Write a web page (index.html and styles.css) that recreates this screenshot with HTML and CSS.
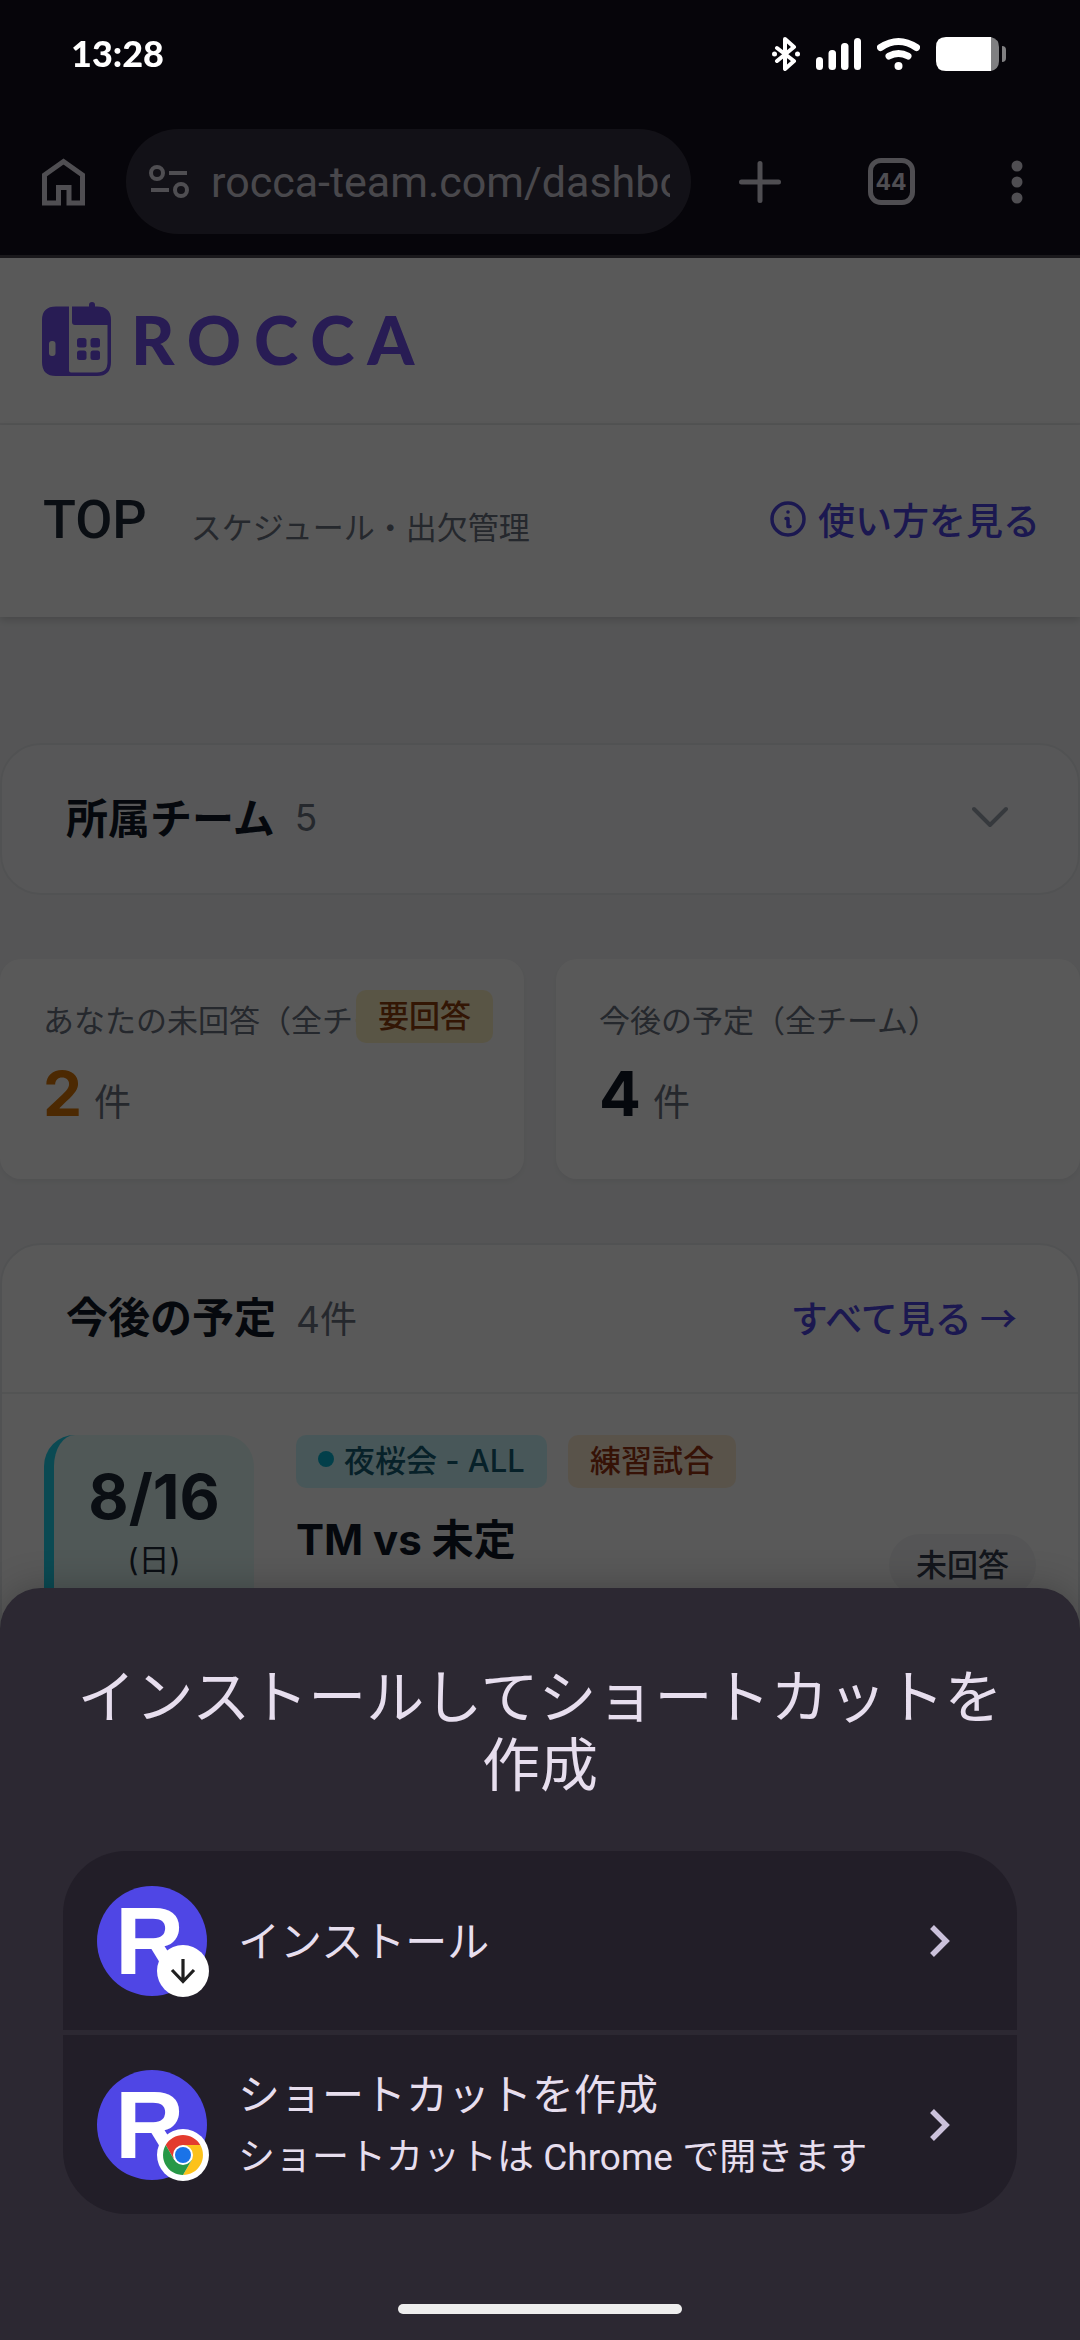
FILE: index.html
```html
<!DOCTYPE html>
<html lang="ja">
<head>
<meta charset="utf-8">
<meta name="viewport" content="width=device-width, initial-scale=1">
<title>ROCCA</title>
<link rel="stylesheet" href="styles.css">
</head>
<body>

<!-- status bar -->
<div class="status">
  <span class="clock">13:28</span>
  <div class="status-icons">
    <svg width="28" height="34" viewBox="0 0 28 34" fill="none" stroke="#fff" stroke-width="4" stroke-linecap="round" stroke-linejoin="round"><path d="M5 11l17 13-9 8V2l9 8L5 24"/><circle cx="2.500" cy="17" r="2.500" fill="#fff" stroke="none"/><circle cx="25.500" cy="17" r="2.500" fill="#fff" stroke="none"/></svg>
    <svg width="45" height="34" viewBox="0 0 45 34" fill="#fff"><rect y="20" width="7" height="13" rx="3.500"/><rect x="12.500" y="13" width="7.500" height="20" rx="3.500"/><rect x="25" y="6" width="7.500" height="27" rx="3.500"/><rect x="38" y="1" width="7" height="32" rx="3.500"/></svg>
    <svg width="43" height="34" viewBox="0 0 43 34" fill="none" stroke="#fff" stroke-width="7" stroke-linecap="round"><path d="M3.500 10.500Q21.500-1.500 39.500 10.500M12 19q9.500-5 19 0"/><circle cx="21.500" cy="29" r="4" fill="#fff" stroke="none"/></svg>
    <svg width="70" height="34" viewBox="0 0 70 34"><path d="M55 0q8 2 8 10v14q0 8-8 10z" fill="#808082"/><path d="M10 0h45v34H10Q0 34 0 24V10Q0 0 10 0z" fill="#fff"/><path d="M66 9q4 0 4 4v8q0 4-4 4z" fill="#808082"/></svg>
  </div>
</div>

<!-- browser toolbar -->
<div class="toolbar">
  <button class="tool" aria-label="ホーム"><svg width="43" height="48" viewBox="0 0 43 48" fill="none" stroke="currentColor" stroke-width="5"><path d="M2.500 45V17L21.500 3.500 40.500 17v28H27V29.500H16.500V45z"/></svg></button>
  <div class="omnibox">
    <svg width="40" height="34" viewBox="0 0 40 34" fill="none" stroke="currentColor" stroke-width="4"><circle cx="8" cy="8" r="6"/><circle cx="32" cy="25" r="6"/><path d="M20 8h18M2 25h18"/></svg>
    <input class="url" type="text" value="rocca-team.com/dashboard" aria-label="URL">
  </div>
  <button class="tool tool-new" aria-label="新しいタブ"><svg width="42" height="42" viewBox="0 0 42 42" stroke="currentColor" stroke-width="5" stroke-linecap="round"><path d="M21 2.500v37M2.500 21h37"/></svg></button>
  <button class="tool" aria-label="タブ"><span class="tabs">44</span></button>
  <button class="tool" aria-label="メニュー"><svg width="12" height="44" viewBox="0 0 12 44" fill="currentColor"><circle cx="6" cy="6" r="5.500"/><circle cx="6" cy="22" r="5.500"/><circle cx="6" cy="38" r="5.500"/></svg></button>
</div>

<!-- page -->
<header class="brand">
  <svg width="69" height="74" viewBox="0 0 69 74" fill="#7250f0">
    <path d="M27 4.500H14Q0 4.500 0 18v42q0 14 14 14h41q14 0 14-14V18Q69 4.500 55 4.500h-2V3q0-3-3-3t-3 3v1.500H30V20q0 3 3 3h32.500v37q0 10.500-10.500 10.500H29q-2 0-2-2z"/>
    <rect x="7" y="39" width="6.500" height="15" rx="3" fill="#fff"/>
    <rect x="35" y="36" width="9.500" height="9.500" rx="2.500"/><rect x="48.500" y="36" width="9.500" height="9.500" rx="2.500"/>
    <rect x="35" y="48.500" width="9.500" height="9.500" rx="2.500"/><rect x="48.500" y="48.500" width="9.500" height="9.500" rx="2.500"/>
  </svg>
  <span class="wordmark">ROCCA</span>
</header>

<div class="title-bar">
  <h1>TOP</h1>
  <p>スケジュール・出欠管理</p>
  <a class="link help" href="#help">
    <svg width="36" height="36" viewBox="0 0 36 36" fill="none" stroke="currentColor" stroke-width="3.500" stroke-linecap="round" stroke-linejoin="round"><circle cx="18" cy="18" r="16"/><path d="M16 17.500h2v8h2"/><circle cx="18" cy="11" r="1.800" fill="currentColor" stroke="none"/></svg>
    使い方を見る
  </a>
</div>

<main>
  <section class="card teams">
    <h2>所属チーム</h2><span class="count">5</span>
    <button class="toggle" aria-label="開く"><svg width="36" height="22" viewBox="0 0 36 22" fill="none" stroke="currentColor" stroke-width="4" stroke-linecap="round" stroke-linejoin="round"><path d="M2 3l16 16L34 3"/></svg></button>
  </section>

  <div class="stats">
    <div class="stat">
      <div class="stat-head"><p>あなたの未回答（全チーム）</p><span class="tag tag-warn">要回答</span></div>
      <div class="stat-value warn"><b>2</b><span>件</span></div>
    </div>
    <div class="stat">
      <div class="stat-head"><p>今後の予定（全チーム）</p></div>
      <div class="stat-value"><b>4</b><span>件</span></div>
    </div>
  </div>

  <section class="card">
    <div class="card-head">
      <h2>今後の予定</h2><span class="count">4件</span>
      <a class="link" href="#events">すべて見る →</a>
    </div>
    <div class="event">
      <div class="date"><b>8/16</b><span>(日)</span></div>
      <div class="event-body">
        <div class="tags"><span class="tag tag-team"><i class="dot"></i>夜桜会 - ALL</span><span class="tag tag-kind">練習試合</span></div>
        <h3>TM vs 未定</h3>
      </div>
      <span class="answer">未回答</span>
    </div>
  </section>
</main>

<div class="scrim"></div>

<!-- install sheet -->
<div class="sheet" role="dialog" aria-labelledby="sheet-title">
  <h2 class="sheet-title" id="sheet-title">インストールしてショートカットを作成</h2>
  <div class="options">
    <button class="option">
      <span class="app-icon">R
        <svg class="app-badge" width="52" height="52" viewBox="-26 -26 52 52"><circle r="26" fill="#fff"/><path d="M0-12V11M-11-1L0 10.500 11-1" fill="none" stroke="#1f1f1f" stroke-width="3.200"/></svg>
      </span>
      <span class="option-text">インストール</span>
      <svg width="20" height="32" viewBox="0 0 20 32" fill="none" stroke="#cbc1db" stroke-width="5.500"><path d="M2 2l14 14L2 30"/></svg>
    </button>
    <button class="option">
      <span class="app-icon">R
        <svg class="app-badge" width="52" height="52" viewBox="-26 -26 52 52"><circle r="26" fill="#fff"/><path d="M-17.300-10A20 20 0 0 1 17.300-10H0L-8.700 5z" fill="#e33b2e"/><path d="M17.300-10A20 20 0 0 1 0 20L8.700 5 0-10z" fill="#fcc21b"/><path d="M0 20A20 20 0 0 1-17.300-10L-8.700 5H8.700z" fill="#279847"/><circle r="10" fill="#fff"/><circle r="8" fill="#1a73e8"/></svg>
      </span>
      <span class="option-text">ショートカットを作成<small>ショートカットは Chrome で開きます</small></span>
      <svg width="20" height="32" viewBox="0 0 20 32" fill="none" stroke="#cbc1db" stroke-width="5.500"><path d="M2 2l14 14L2 30"/></svg>
    </button>
  </div>
  <div class="home-bar"></div>
</div>

</body>
</html>
```
FILE: styles.css
```css
* { box-sizing: border-box; }
html { height: 100%; overflow: hidden; }
body {
	margin: 0;
	height: 100%;
	overflow: hidden;
	background: #f3f4f6;
	color: #111827;
	font-family: Inter, "Noto Sans CJK JP", sans-serif;
}
h1, h2, h3, p { margin: 0; }
svg { display: block; flex: none; }
button {
	border: 0;
	padding: 0;
	background: none;
	color: inherit;
	font: inherit;
}

/* status bar */
.status {
	display: flex;
	align-items: center;
	justify-content: space-between;
	height: 108px;
	padding: 0 74px 0 71px;
	background: #120f1d;
}
.clock {
	position: relative;
	z-index: 2;
	padding-bottom: 3px;
	color: #fff;
	font: 900 36px Lato, sans-serif;
}
.status-icons {
	position: relative;
	z-index: 2;
	display: flex;
	gap: 16px;
}

/* toolbar */
.toolbar {
	display: flex;
	align-items: center;
	height: 150px;
	border-bottom: 3px solid #48454f;
	background: #120f1d;
	color: #e2dfea;
}
.tool {
	display: flex;
	justify-content: center;
	flex: none;
	width: 126px;
}
.tool-new { width: 137px; }
.omnibox {
	display: flex;
	align-items: center;
	gap: 22px;
	flex: 1;
	min-width: 0;
	height: 105px;
	padding: 0 21px 0 23px;
	border-radius: 53px;
	background: #363342;
}
.url {
	flex: 1;
	min-width: 0;
	padding: 0;
	border: 0;
	background: none;
	color: #d2cfda;
	font: 43px Roboto, sans-serif;
}
.tabs {
	width: 47px;
	height: 47px;
	border: 5px solid;
	border-radius: 13px;
	font: bold 23px/38px Inter, sans-serif;
	text-align: center;
}

/* page header */
.brand {
	display: flex;
	align-items: center;
	gap: 20px;
	height: 167px;
	padding: 0 42px 4px;
	border-bottom: 2px solid #eeeff1;
	background: #fff;
}
.wordmark {
	color: #7250f0;
	font: 900 67px Lato, sans-serif;
	letter-spacing: 13px;
}
.title-bar {
	display: flex;
	align-items: center;
	gap: 44px;
	height: 192px;
	padding: 0 40px 4px 43px;
	background: #fff;
	box-shadow: 0 3px 8px rgba(0,0,0,.16);
}
.title-bar h1 {
	color: #1f2937;
	font: 500 54px Roboto, sans-serif;
}
.title-bar p {
	padding-top: 12px;
	color: #6b7280;
	font-size: 31px;
}
.link {
	margin-left: auto;
	color: #4f46e5;
	font: 500 37px "Noto Sans CJK JP", sans-serif;
	text-decoration: none;
}
.help {
	display: flex;
	align-items: center;
	gap: 12px;
}

/* cards */
main {
	display: flex;
	flex-direction: column;
	gap: 64px;
	padding-top: 126px;
}
.card {
	border: 2px solid #e9eaed;
	border-radius: 41px;
	background: #fff;
}
.teams, .card-head {
	display: flex;
	align-items: center;
	gap: 20px;
	height: 152px;
	padding: 0 61px 4px 64px;
}
.teams {
	padding-right: 70px;
	background: #fafafb;
}
.card h2 {
	padding-bottom: 4px;
	font-size: 42px;
}
.count {
	color: #6b7280;
	font-size: 37px;
}
.toggle {
	margin-left: auto;
	color: #9ca3af;
}
.stats {
	display: grid;
	grid-template-columns: repeat(2, minmax(0, 1fr));
	gap: 32px;
}
.stat {
	height: 220px;
	padding: 31px 31px 31px 43px;
	border-radius: 21px;
	background: #fff;
	box-shadow: 0 3px 6px rgba(0,0,0,.05);
}
.stat-head {
	display: flex;
	height: 58px;
}
.stat-head p {
	flex: 1;
	min-width: 0;
	overflow: hidden;
	color: #6b7280;
	font-size: 31px;
	line-height: 62px;
	white-space: nowrap;
}
.stat-value {
	display: flex;
	align-items: baseline;
	gap: 12px;
}
.stat-value b {
	font-size: 62px;
	line-height: 92px;
}
.stat-value span {
	color: #6b7280;
	font-size: 37px;
}
.stat-value.warn { color: #d97706; }
.tag {
	display: inline-flex;
	align-items: center;
	flex: none;
	height: 53px;
	padding: 0 22px 6px;
	border-radius: 10px;
	font-size: 31px;
	font-weight: 500;
}
.tag-warn {
	background: #fef3c7;
	color: #92400e;
}
.tag-team {
	background: #cffafe;
	color: #155e75;
}
.tag-kind {
	background: #ffedd5;
	color: #9a3412;
}
.dot {
	width: 16px;
	height: 16px;
	margin-right: 10px;
	border-radius: 50%;
	background: #06b6d4;
}

/* event list */
.card-head {
	height: 149px;
	border-bottom: 2px solid #eeeff1;
}
.event {
	display: flex;
	align-items: flex-start;
	gap: 42px;
	padding: 41px 42px;
}
.date {
	display: flex;
	flex-direction: column;
	align-items: center;
	width: 210px;
	height: 260px;
	padding-top: 25px;
	border-left: 10px solid #22d3ee;
	border-radius: 31px;
	background: #e6fcf8;
	color: #1f2937;
}
.date b {
	font-size: 62px;
	line-height: 74px;
}
.date span {
	font-size: 31px;
	line-height: 52px;
}
.tags {
	display: flex;
	gap: 21px;
}
.event h3 {
	margin-top: 20px;
	font-size: 42px;
	line-height: 64px;
}
.answer {
	align-self: center;
	margin-left: auto;
	padding: 0 27px;
	border-radius: 32px;
	background: #f3f4f6;
	color: #374151;
	font-size: 31px;
	font-weight: 500;
	line-height: 62px;
}

/* overlay */
.scrim {
	position: fixed;
	inset: 0;
	z-index: 1;
	background: rgba(0,0,0,.65);
}
.sheet {
	position: fixed;
	left: 0;
	right: 0;
	bottom: 0;
	z-index: 3;
	padding: 76px 63px 26px;
	border-radius: 41px 41px 0 0;
	background: #2c2832;
	box-shadow: 0 0 36px rgba(0,0,0,.25);
	color: #e7deee;
	font-family: Roboto, "Noto Sans CJK JP", sans-serif;
}
.sheet-title {
	font-size: 58px;
	font-weight: normal;
	line-height: 68px;
	text-align: center;
}
.options {
	display: grid;
	gap: 5px;
	margin-top: 51px;
	border-radius: 63px;
	overflow: hidden;
}
.option {
	display: flex;
	align-items: center;
	gap: 31px;
	height: 179px;
	padding: 0 67px 0 34px;
	background: #221e28;
	text-align: left;
}
.app-icon {
	position: relative;
	flex: none;
	width: 110px;
	height: 110px;
	padding-left: 18px;
	border-radius: 50%;
	background: #4f46e5;
	color: #fff;
	font: bold 96px/110px "Liberation Sans", sans-serif;
}
.app-badge {
	position: absolute;
	right: -2px;
	bottom: -1px;
}
.option-text {
	flex: 1;
	padding-top: 4px;
	font-size: 42px;
	line-height: 62px;
}
.option-text small {
	display: block;
	font-size: 37px;
}
.home-bar {
	width: 284px;
	height: 10px;
	margin: 90px auto 0;
	border-radius: 5px;
	background: #eee;
}
```
